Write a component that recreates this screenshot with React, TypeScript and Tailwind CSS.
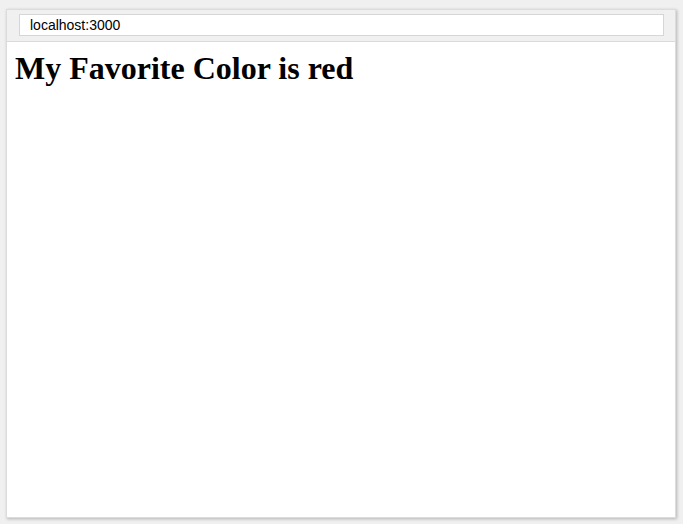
import React from 'react';

export default function App() {
  return (
    <div className="w-[683px] h-[524px] bg-[#f0f0f0] pt-[9px] pl-[6px]">
      <div className="w-[670px] h-[509px] flex flex-col bg-white border border-[#dcdcdc] shadow-[1px_1px_3px_rgba(0,0,0,0.25)]">
        <div className="h-[32px] bg-[#f0f0f0] border-b border-[#dadada] flex items-start pt-[4px] pl-[12px] pr-[11px]">
          <div className="flex-1 h-[22px] bg-white border border-[#d6d6d6] flex items-center pl-[10px] text-[14px] text-black font-['Liberation_Sans',Arial,sans-serif]">
            localhost:3000
          </div>
        </div>
        <div className="flex-1 px-[8px] pt-[8px]">
          <h1 className="text-[32px] font-bold text-black font-['Liberation_Serif','Times_New_Roman',serif] leading-[37px]">
            My Favorite Color is red
          </h1>
        </div>
      </div>
    </div>
  );
}
